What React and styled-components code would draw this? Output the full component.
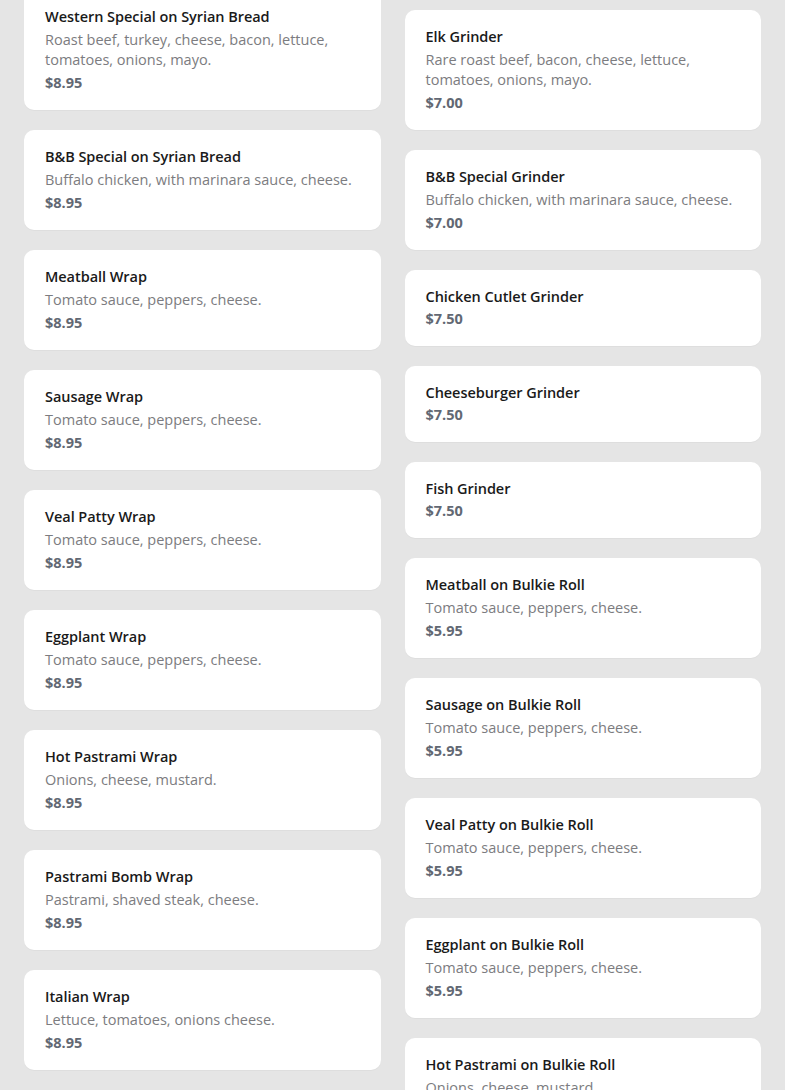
import React from "react";
import styled, { createGlobalStyle } from "styled-components";

const Global = createGlobalStyle`
  html, body { margin: 0; padding: 0; background: #e5e5e5; }
  body { font-family: "Open Sans", "Liberation Sans", sans-serif; overflow: hidden; }
`;

const Page = styled.div`
  display: flex;
  gap: 24px;
  padding: 10px 24px;
  align-items: flex-start;
`;

const Column = styled.div`
  flex: 1 1 0;
  min-width: 0;
  display: flex;
  flex-direction: column;
  gap: 20px;
  margin-top: ${(p) => p.$offset || 0}px;
`;

const Card = styled.div`
  background: #ffffff;
  border-radius: 10px;
  padding: 16px 21px 16px;
  box-shadow: 0 1px 1px rgba(0, 0, 0, 0.03);
  display: flex;
  flex-direction: column;
`;

const Title = styled.div`
  font-size: 14.5px;
  line-height: 22px;
  font-weight: 600;
  letter-spacing: -0.05px;
  color: #1a1a1a;
`;

const Desc = styled.div`
  font-size: 14.5px;
  line-height: 20px;
  color: #7c7c80;
  margin: 2px 0;
`;

const Price = styled.div`
  font-size: 14.5px;
  line-height: 22px;
  font-weight: 700;
  color: #626873;
`;

const left = [
  ["Western Special on Syrian Bread", "Roast beef, turkey, cheese, bacon, lettuce, tomatoes, onions, mayo.", "$8.95"],
  ["B&B Special on Syrian Bread", "Buffalo chicken, with marinara sauce, cheese.", "$8.95"],
  ["Meatball Wrap", "Tomato sauce, peppers, cheese.", "$8.95"],
  ["Sausage Wrap", "Tomato sauce, peppers, cheese.", "$8.95"],
  ["Veal Patty Wrap", "Tomato sauce, peppers, cheese.", "$8.95"],
  ["Eggplant Wrap", "Tomato sauce, peppers, cheese.", "$8.95"],
  ["Hot Pastrami Wrap", "Onions, cheese, mustard.", "$8.95"],
  ["Pastrami Bomb Wrap", "Pastrami, shaved steak, cheese.", "$8.95"],
  ["Italian Wrap", "Lettuce, tomatoes, onions cheese.", "$8.95"],
  ["Chicken Caesar Wrap", "Chicken, lettuce, caesar dressing.", "$8.95"],
];

const right = [
  ["Elk Grinder", "Rare roast beef, bacon, cheese, lettuce, tomatoes, onions, mayo.", "$7.00"],
  ["B&B Special Grinder", "Buffalo chicken, with marinara sauce, cheese.", "$7.00"],
  ["Chicken Cutlet Grinder", null, "$7.50"],
  ["Cheeseburger Grinder", null, "$7.50"],
  ["Fish Grinder", null, "$7.50"],
  ["Meatball on Bulkie Roll", "Tomato sauce, peppers, cheese.", "$5.95"],
  ["Sausage on Bulkie Roll", "Tomato sauce, peppers, cheese.", "$5.95"],
  ["Veal Patty on Bulkie Roll", "Tomato sauce, peppers, cheese.", "$5.95"],
  ["Eggplant on Bulkie Roll", "Tomato sauce, peppers, cheese.", "$5.95"],
  ["Hot Pastrami on Bulkie Roll", "Onions, cheese, mustard.", "$5.95"],
];

function Item({ name, desc, price }) {
  return (
    <Card>
      <Title>{name}</Title>
      {desc && <Desc>{desc}</Desc>}
      <Price>{price}</Price>
    </Card>
  );
}

export default function App() {
  return (
    <>
      <Global />
      <Page>
        <Column $offset={-20}>
          {left.map(([n, d, p]) => (
            <Item key={n} name={n} desc={d} price={p} />
          ))}
        </Column>
        <Column>
          {right.map(([n, d, p]) => (
            <Item key={n} name={n} desc={d} price={p} />
          ))}
        </Column>
      </Page>
    </>
  );
}
